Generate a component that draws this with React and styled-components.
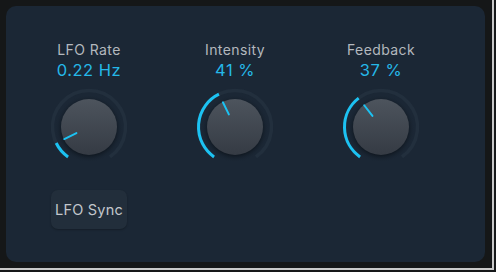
import React from "react";
import styled, { createGlobalStyle } from "styled-components";

const Global = createGlobalStyle`
  html, body { margin: 0; padding: 0; background: #161819; }
  body { font-family: Inter, "Noto Sans", "Liberation Sans", sans-serif; }
`;

const Frame = styled.div`
  width: 494px;
  height: 270px;
  box-sizing: border-box;
  padding: 6px 7px 6px 6px;
  background: #151718;
  border-right: 2px solid #c9c9c9;
  border-bottom: 2px solid #c9c9c9;
`;

const Panel = styled.div`
  width: 100%;
  height: 100%;
  box-sizing: border-box;
  background: #1b2735;
  border-radius: 10px;
  padding: 35px 0 0 10px;
  display: grid;
  grid-template-columns: repeat(3, 146px);
  align-items: start;
`;

const Column = styled.div`
  display: flex;
  flex-direction: column;
  align-items: center;
`;

const Label = styled.div`
  font-size: 14px;
  line-height: 17px;
  color: #b3b8be;
  letter-spacing: 0.4px;
`;

const Value = styled.div`
  margin-top: 2px;
  font-size: 16.5px;
  line-height: 20px;
  color: #25b8e8;
  letter-spacing: 0.5px;
`;

const KnobSvg = styled.svg`
  display: block;
  margin-top: 5px;
`;

const SyncButton = styled.button`
  margin-top: 21px;
  width: 76px;
  height: 39px;
  border: none;
  border-radius: 7px;
  background: #222e3b;
  color: #c3c7cc;
  font-family: Inter, "Noto Sans", "Liberation Sans", sans-serif;
  font-size: 14.5px;
  letter-spacing: 0.2px;
  padding: 0;
  box-shadow: 0 1px 2px rgba(0, 0, 0, 0.25);
`;

const C = 42;
const START = -145;
const RANGE = 290;

function polar(a, r) {
  const rad = (a * Math.PI) / 180;
  return [C + r * Math.sin(rad), C - r * Math.cos(rad)];
}

function arc(a0, a1, r) {
  const [x0, y0] = polar(a0, r);
  const [x1, y1] = polar(a1, r);
  const large = a1 - a0 > 180 ? 1 : 0;
  return `M ${x0.toFixed(2)} ${y0.toFixed(2)} A ${r} ${r} 0 ${large} 1 ${x1.toFixed(2)} ${y1.toFixed(2)}`;
}

function Knob({ id, fraction }) {
  const end = START + RANGE * fraction;
  const [ix0, iy0] = polar(end, 14);
  const [ix1, iy1] = polar(end, 27.5);
  return (
    <KnobSvg width="84" height="84" viewBox="0 0 84 84">
      <defs>
        <linearGradient id={`body-${id}`} x1="0" y1="0" x2="0" y2="1">
          <stop offset="0" stopColor="#4d545d" />
          <stop offset="1" stopColor="#353b44" />
        </linearGradient>
        <radialGradient id={`halo-${id}`} cx="0.5" cy="0.5" r="0.5">
          <stop offset="0.78" stopColor="#0f1720" stopOpacity="0.9" />
          <stop offset="1" stopColor="#1b2735" stopOpacity="0" />
        </radialGradient>
      </defs>
      <path d={arc(START, START + RANGE, 36.5)} fill="none" stroke="#222f3d" strokeWidth="3.5" />
      <circle cx={C} cy={C + 1.5} r="34" fill={`url(#halo-${id})`} />
      <circle cx={C} cy={C} r="28" fill={`url(#body-${id})`} />
      <path d={arc(START, end, 36.5)} fill="none" stroke="#1cc2f2" strokeWidth="3" />
      <line x1={ix0} y1={iy0} x2={ix1} y2={iy1} stroke="#1cc2f2" strokeWidth="2" strokeLinecap="round" />
    </KnobSvg>
  );
}

const controls = [
  { id: "rate", label: "LFO Rate", value: "0.22 Hz", fraction: 0.1, button: true },
  { id: "intensity", label: "Intensity", value: "41 %", fraction: 0.41 },
  { id: "feedback", label: "Feedback", value: "37 %", fraction: 0.37 },
];

export default function App() {
  return (
    <>
      <Global />
      <Frame>
        <Panel>
          {controls.map((c) => (
            <Column key={c.id}>
              <Label>{c.label}</Label>
              <Value>{c.value}</Value>
              <Knob id={c.id} fraction={c.fraction} />
              {c.button && <SyncButton>LFO Sync</SyncButton>}
            </Column>
          ))}
        </Panel>
      </Frame>
    </>
  );
}
